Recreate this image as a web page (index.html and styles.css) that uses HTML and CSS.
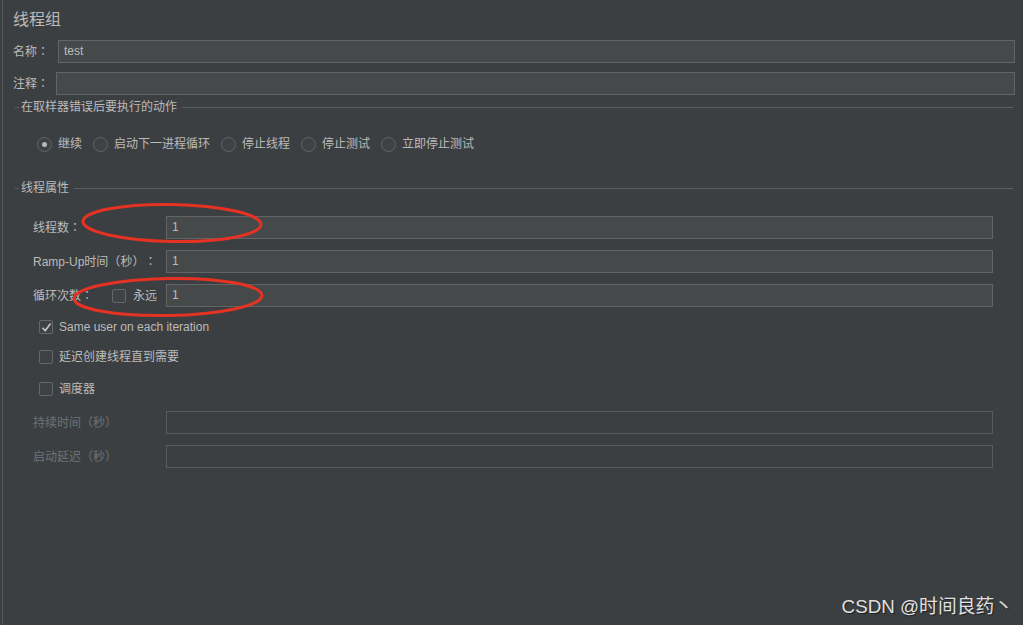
FILE: index.html
```html
<!DOCTYPE html>
<html lang="zh-CN">
<head>
    <meta charset="UTF-8">
    <meta name="viewport" content="width=device-width, initial-scale=1.0">
    <title>线程组</title>
    <link rel="stylesheet" href="styles.css">
</head>
<body>
    <div class="panel">
        <div class="panel-title">线程组</div>

        <div class="field-row">
            <label class="field-label">名称<span class="p" lang="zh-TW">：</span></label>
            <div class="text-input">test</div>
        </div>
        <div class="field-row comment-row">
            <label class="field-label">注释<span class="p" lang="zh-TW">：</span></label>
            <div class="text-input"></div>
        </div>

        <!-- sampler error action -->
        <div class="group-header"><span>在取样器错误后要执行的动作</span></div>
        <div class="radio-row">
            <div class="radio checked"><span class="dot"></span></div><span class="radio-label">继续</span>
            <div class="radio"></div><span class="radio-label">启动下一进程循环</span>
            <div class="radio"></div><span class="radio-label">停止线程</span>
            <div class="radio"></div><span class="radio-label">停止测试</span>
            <div class="radio"></div><span class="radio-label">立即停止测试</span>
        </div>

        <!-- thread properties -->
        <div class="group-header props-header"><span>线程属性</span></div>
        <div class="props">
            <div class="prop-row first">
                <div class="prop-label">线程数<span class="p" lang="zh-TW">：</span></div>
                <div class="text-input">1</div>
            </div>
            <div class="prop-row">
                <div class="prop-label">Ramp-Up时间<span class="p" lang="zh-TW">（</span>秒<span class="p" lang="zh-TW">）：</span></div>
                <div class="text-input">1</div>
            </div>
            <div class="prop-row">
                <div class="prop-label loop-label">
                    <span>循环次数<span class="p" lang="zh-TW">：</span></span>
                    <span class="forever"><span class="checkbox"></span>永远</span>
                </div>
                <div class="text-input">1</div>
            </div>

            <div class="check-row first-check">
                <span class="checkbox checked">
                    <svg width="11" height="11" viewBox="0 0 11 11"><path d="M1.5 5.8 L4.2 8.8 L9.6 1.6" fill="none" stroke="#c8c8c8" stroke-width="1.6"/></svg>
                </span>
                <span>Same user on each iteration</span>
            </div>
            <div class="check-row">
                <span class="checkbox"></span>
                <span>延迟创建线程直到需要</span>
            </div>
            <div class="check-row last-check">
                <span class="checkbox"></span>
                <span>调度器</span>
            </div>

            <div class="prop-row disabled duration">
                <div class="prop-label">持续时间<span class="p" lang="zh-TW">（</span>秒<span class="p" lang="zh-TW">）</span></div>
                <div class="text-input"></div>
            </div>
            <div class="prop-row disabled">
                <div class="prop-label">启动延迟<span class="p" lang="zh-TW">（</span>秒<span class="p" lang="zh-TW">）</span></div>
                <div class="text-input"></div>
            </div>
        </div>

        <!-- red marker rings -->
        <svg class="marks" width="1023" height="625" viewBox="0 0 1023 625">
            <ellipse cx="172" cy="223" rx="89" ry="18.5" fill="none" stroke="#e63222" stroke-width="3" transform="rotate(1 172 223)"/>
            <ellipse cx="168" cy="297" rx="94" ry="18.5" fill="none" stroke="#e63222" stroke-width="3" transform="rotate(-1 168 297)"/>
        </svg>

        <div class="watermark">CSDN @时间良药丶</div>
    </div>
</body>
</html>
```

FILE: styles.css
```css
* {
    margin: 0;
    padding: 0;
    box-sizing: border-box;
}

body {
    background: #3c3f41;
    color: #bbbbbb;
    font-family: "Liberation Sans", "Noto Sans CJK SC", sans-serif;
    font-size: 12px;
    line-height: 14px;
    text-spacing-trim: space-all;
    width: 1023px;
    height: 625px;
    overflow: hidden;
}

/* centred full-width punctuation */
.p {
    font-family: "Noto Sans CJK TC", sans-serif;
    line-height: 14px;
}

.panel {
    position: relative;
    margin-left: 2px;
    height: 625px;
    border-left: 1px solid #55595b;
    padding: 10px 8px 0 10px;
}

.panel-title {
    font-size: 16px;
    line-height: 20px;
    height: 20px;
}

.field-row {
    display: flex;
    align-items: center;
    margin-top: 10px;
    height: 23px;
}

.comment-row {
    margin-top: 9px;
}

.field-label {
    width: 45px;
    flex: none;
}

.comment-row .field-label {
    width: 43px;
}

.text-input {
    flex: 1;
    height: 23px;
    line-height: 21px;
    padding-left: 5px;
    background: #45494a;
    border: 1px solid #646464;
    color: #bbbbbb;
}

.field-row:first-of-type .text-input {
    margin-right: 2px;
}

/* titled separator lines */
.group-header {
    display: flex;
    align-items: center;
    height: 14px;
    margin-top: 5px;
    margin-right: 2px;
}

.group-header::before {
    content: "";
    width: 4px;
    margin-left: 2px;
    border-top: 1px solid #5b5e60;
}

.group-header::after {
    content: "";
    flex: 1;
    border-top: 1px solid #5b5e60;
}

.group-header span {
    padding: 0 5px 0 2px;
}

.props-header {
    margin-top: 27px;
}

.radio-row {
    display: flex;
    align-items: center;
    height: 20px;
    margin-top: 20px;
    padding-left: 24px;
}

.radio {
    width: 15px;
    height: 15px;
    border-radius: 50%;
    border: 1px solid #636668;
    background: #3f4244;
    display: flex;
    align-items: center;
    justify-content: center;
    flex: none;
}

.radio .dot {
    width: 5px;
    height: 5px;
    border-radius: 50%;
    background: #b8b8b8;
}

.radio-label {
    margin: 0 11px 0 6px;
}

.props {
    padding: 0 22px 0 20px;
}

.prop-row {
    display: flex;
    align-items: center;
    height: 23px;
    margin-top: 11px;
}

.prop-row.first {
    margin-top: 21px;
}

.prop-label {
    width: 133px;
    flex: none;
}

.loop-label {
    display: flex;
    justify-content: space-between;
    align-items: center;
    padding-right: 9px;
}

.forever {
    display: flex;
    align-items: center;
    gap: 7px;
}

.checkbox {
    width: 14px;
    height: 14px;
    border: 1px solid #65686a;
    border-radius: 2px;
    background: #3f4244;
    display: inline-flex;
    align-items: center;
    justify-content: center;
    flex: none;
}

.check-row {
    display: flex;
    align-items: center;
    gap: 6px;
    height: 20px;
    margin-top: 10px;
    padding-left: 6px;
}

.last-check {
    margin-top: 12px;
}

.duration {
    margin-top: 12px;
}

.disabled .prop-label {
    color: #6f7274;
}

.disabled .text-input {
    background: #3c3f41;
    border-color: #595c5e;
}

.marks {
    position: absolute;
    left: -3px;
    top: 0;
    pointer-events: none;
}

.watermark {
    position: absolute;
    right: 10px;
    bottom: 7px;
    font-size: 18.8px;
    line-height: 22px;
    color: #e0e0e0;
    text-shadow: 1px 1px 1px #1e1f20;
}
```
